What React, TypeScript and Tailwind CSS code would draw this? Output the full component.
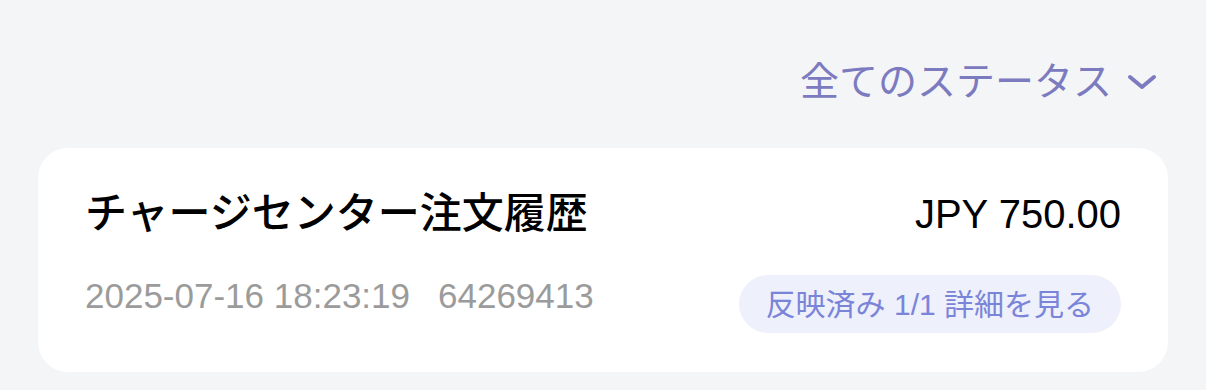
export default function App() {
  return (
    <div
      className="h-[390px] w-full bg-[#f4f5f7] pt-[60px]"
      style={{ fontFamily: '"Liberation Sans", "Noto Sans CJK JP", sans-serif' }}
    >
      <div className="flex h-[44px] items-center justify-end gap-[15px] pr-[49px]">
        <span className="text-[39px] leading-[44px] text-[#7c7bbf]">全てのステータス</span>
        <svg width="30" height="16" viewBox="0 0 30 16" fill="none">
          <path d="M3 3 L15 13 L27 3" stroke="#7c7bbf" strokeWidth="4" strokeLinecap="round" strokeLinejoin="round" />
        </svg>
      </div>

      <div className="mx-[38px] mt-[44px] rounded-[30px] bg-white px-[47px] pb-[39px] pt-[44px]">
        <div className="flex items-center justify-between">
          <h2 className="text-[42px] font-medium leading-[44px] text-black">チャージセンター注文履歴</h2>
          <span className="text-[40px] leading-[44px] text-black">JPY 750.00</span>
        </div>
        <div className="mt-[39px] flex items-start justify-between">
          <div className="mt-[1px] flex gap-[28px] text-[35px] leading-[40px] text-[#9b9b9b]">
            <span>2025-07-16 18:23:19</span>
            <span>64269413</span>
          </div>
          <button className="flex h-[58px] items-center rounded-full bg-[#eef0fb] px-[27px] text-[30px] text-[#7a84d8]">
            反映済み 1/1 詳細を見る
          </button>
        </div>
      </div>
    </div>
  )
}
